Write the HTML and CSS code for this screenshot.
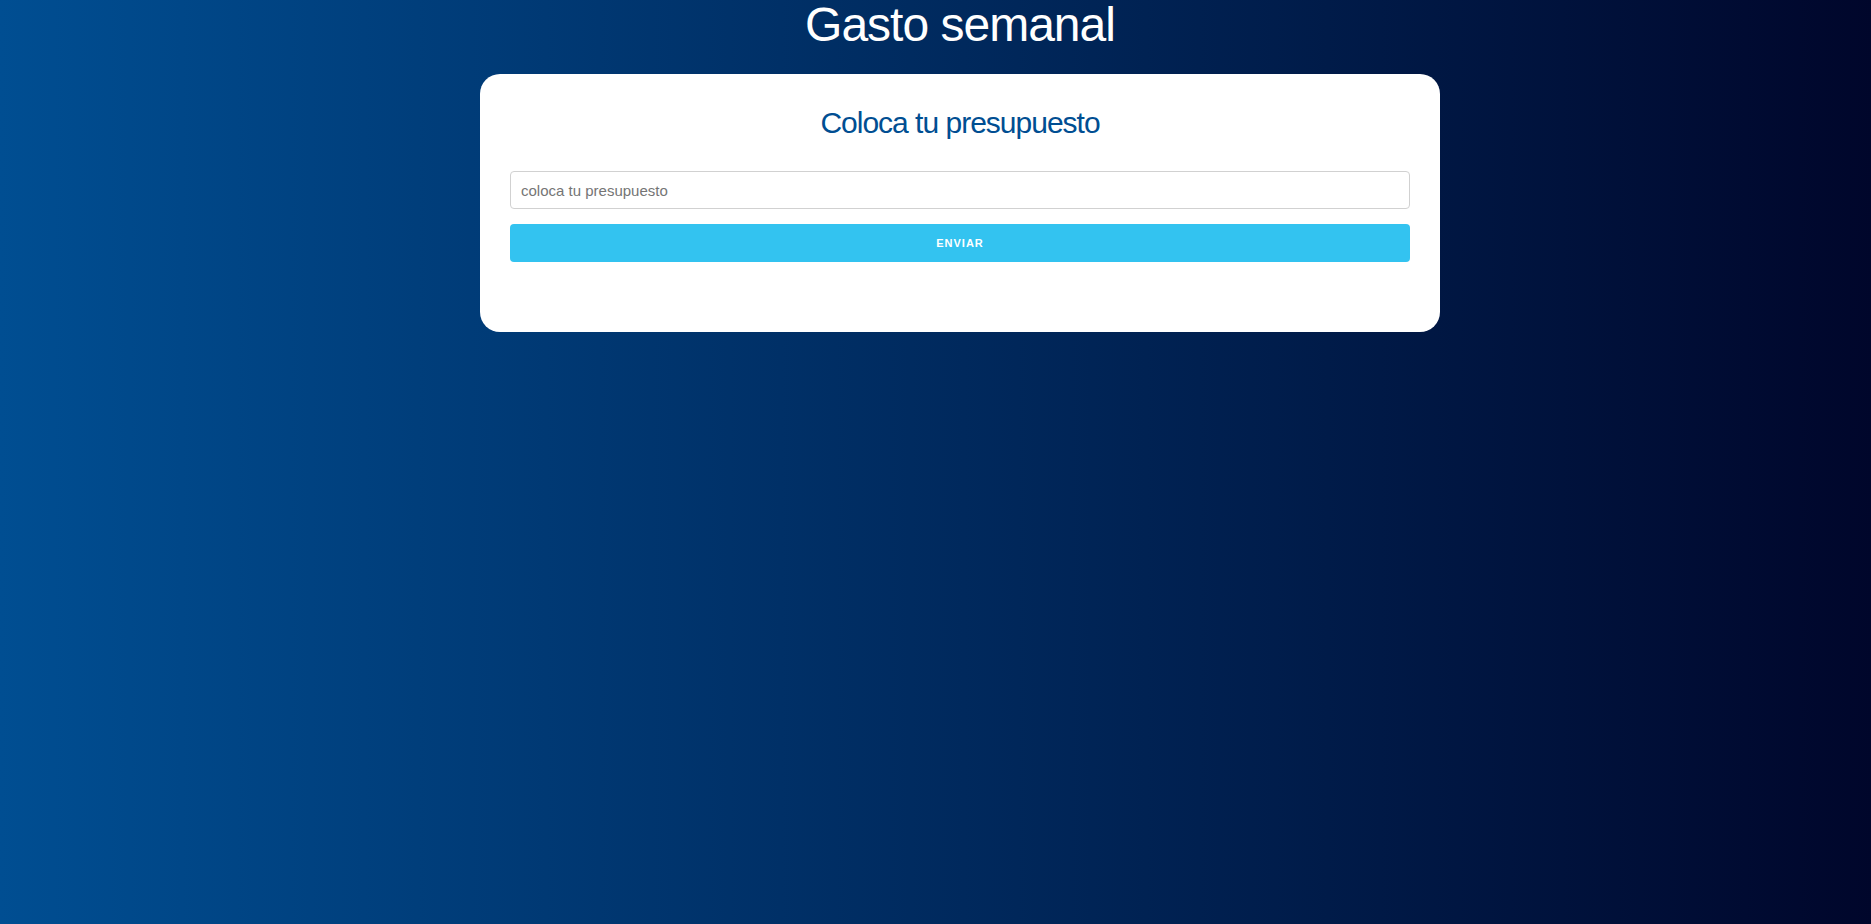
FILE: index.html
```html
<!DOCTYPE html>
<html lang="es">
<head>
  <meta charset="utf-8">
  <meta name="viewport" content="width=device-width, initial-scale=1">
  <title>Gasto semanal</title>
  <link rel="stylesheet" href="styles.css">
</head>
<body>
  <div class="page">
    <header>
      <h1 class="title">Gasto semanal</h1>
    </header>
    <main class="card">
      <h2 class="card-title" id="presupuesto-titulo">Coloca tu presupuesto</h2>
      <form class="form">
        <input class="field" type="number" aria-labelledby="presupuesto-titulo" placeholder="coloca tu presupuesto">
        <button class="submit" type="submit">Enviar</button>
      </form>
    </main>
  </div>
</body>
</html>
```

FILE: styles.css
```css
* {
  box-sizing: border-box;
}

body {
  margin: 0;
  min-height: 100vh;
  background: linear-gradient(to right, #004e92, #000428 103%);
  font-family: "Liberation Sans", Arial, Helvetica, sans-serif;
  font-size: 15px;
}

.page {
  padding-left: 49px;
}

.title {
  margin: 0 0 24px;
  color: #fff;
  font-size: 48px;
  font-weight: 400;
  line-height: 50px;
  letter-spacing: -1px;
  text-align: center;
}

.card {
  max-width: 960px;
  margin: 0 auto;
  padding: 30px 30px 70px;
  border-radius: 20px;
  background: #fff;
}

.card-title {
  margin: 0 0 30px;
  color: #004e92;
  font-size: 30px;
  font-weight: 400;
  line-height: 37px;
  letter-spacing: -1px;
  text-align: center;
}

.form {
  display: flex;
  flex-direction: column;
  gap: 15px;
}

.field {
  width: 100%;
  height: 38px;
  padding: 6px 10px;
  border: 1px solid #d1d1d1;
  border-radius: 4px;
  background: #fff;
  color: #222;
  font: inherit;
}

.field::placeholder {
  color: #757575;
}

.submit {
  height: 38px;
  padding: 0 30px;
  border: 0;
  border-radius: 4px;
  background: #33c3f0;
  color: #fff;
  font-family: inherit;
  font-size: 11px;
  font-weight: 600;
  line-height: 38px;
  letter-spacing: 1px;
  text-transform: uppercase;
  cursor: pointer;
}
```
